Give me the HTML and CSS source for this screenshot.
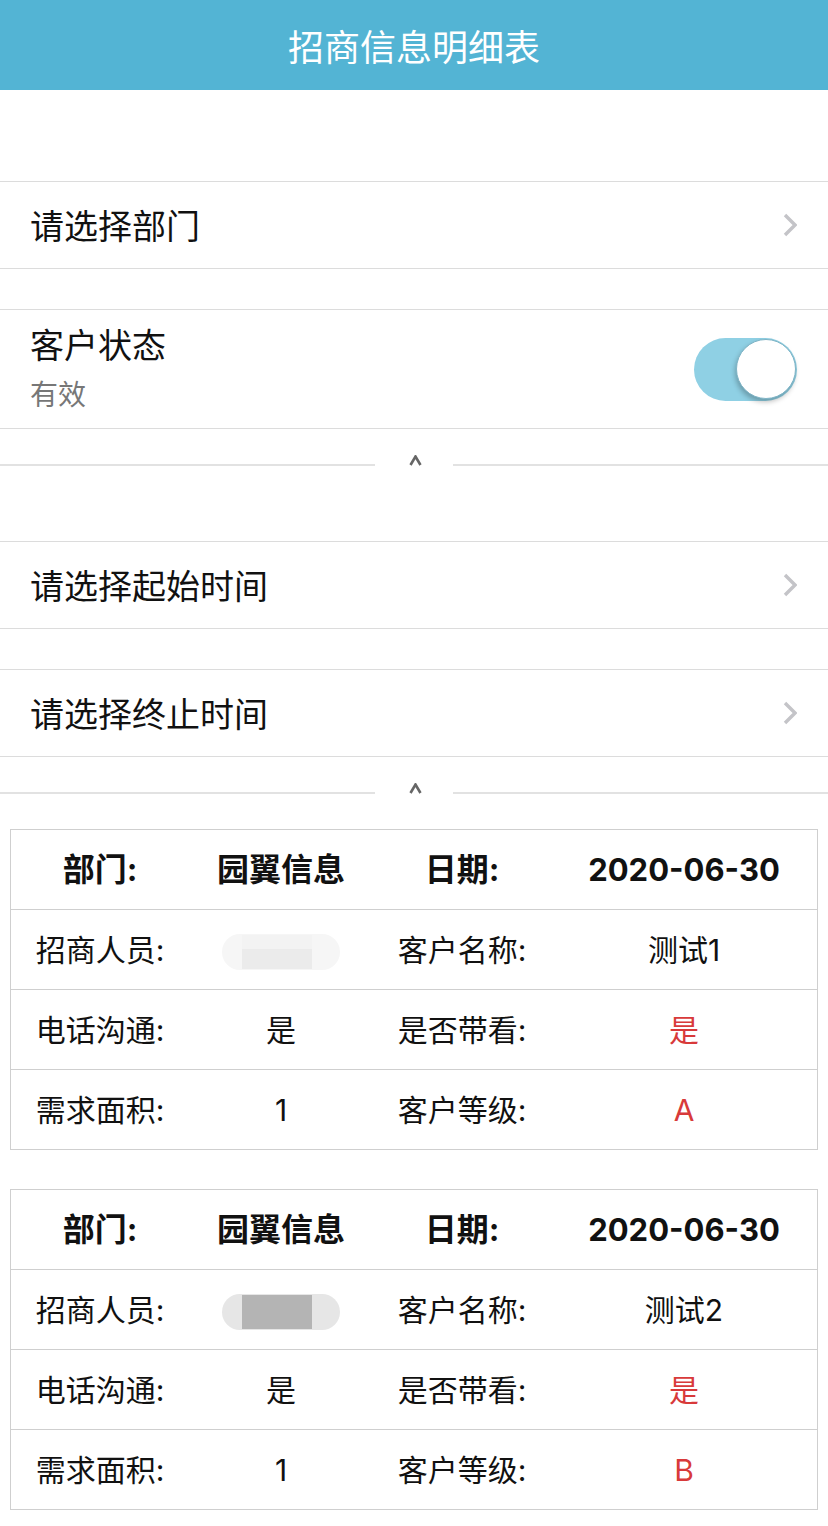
FILE: index.html
```html
<!DOCTYPE html>
<html lang="zh-CN">
<head>
<meta charset="utf-8">
<title>招商信息明细表</title>
<link rel="stylesheet" href="styles.css">
</head>
<body>
<header class="topbar"><h1 class="title">招商信息明细表</h1></header>

<div class="cell cell-first">
  <span class="cell-text">请选择部门</span>
  <svg class="chev" width="14" height="24" viewBox="0 0 14 24"><polyline points="2,2 12,12 2,22" fill="none" stroke="#c4c4c8" stroke-width="3.4"/></svg>
</div>

<div class="cell cell-tall">
  <div class="cell-stack">
    <span class="cell-text">客户状态</span>
    <span class="cell-sub">有效</span>
  </div>
  <div class="toggle"><div class="knob"></div></div>
</div>

<div class="divider">
  <div class="divider-line"></div>
  <div class="divider-mid"><svg width="13" height="11" viewBox="0 0 13 11"><polyline points="1.5,10 6.5,1.5 11.5,10" fill="none" stroke="#666" stroke-width="2.6"/></svg></div>
  <div class="divider-line"></div>
</div>

<div class="cell">
  <span class="cell-text">请选择起始时间</span>
  <svg class="chev" width="14" height="24" viewBox="0 0 14 24"><polyline points="2,2 12,12 2,22" fill="none" stroke="#c4c4c8" stroke-width="3.4"/></svg>
</div>

<div class="cell">
  <span class="cell-text">请选择终止时间</span>
  <svg class="chev" width="14" height="24" viewBox="0 0 14 24"><polyline points="2,2 12,12 2,22" fill="none" stroke="#c4c4c8" stroke-width="3.4"/></svg>
</div>

<div class="divider">
  <div class="divider-line"></div>
  <div class="divider-mid"><svg width="13" height="11" viewBox="0 0 13 11"><polyline points="1.5,10 6.5,1.5 11.5,10" fill="none" stroke="#666" stroke-width="2.6"/></svg></div>
  <div class="divider-line"></div>
</div>

<section class="card">
  <div class="row row-head">
    <span>部门:</span><span>园翼信息</span><span>日期:</span><span class="date">2020-06-30</span>
  </div>
  <div class="row">
    <span>招商人员:</span><span><span class="blur blur-light"><span class="blur-box"></span></span></span><span>客户名称:</span><span>测试1</span>
  </div>
  <div class="row">
    <span>电话沟通:</span><span>是</span><span>是否带看:</span><span class="red">是</span>
  </div>
  <div class="row">
    <span>需求面积:</span><span>1</span><span>客户等级:</span><span class="red">A</span>
  </div>
</section>

<section class="card card-next">
  <div class="row row-head">
    <span>部门:</span><span>园翼信息</span><span>日期:</span><span class="date">2020-06-30</span>
  </div>
  <div class="row">
    <span>招商人员:</span><span><span class="blur blur-dark"><span class="blur-box"></span></span></span><span>客户名称:</span><span>测试2</span>
  </div>
  <div class="row">
    <span>电话沟通:</span><span>是</span><span>是否带看:</span><span class="red">是</span>
  </div>
  <div class="row">
    <span>需求面积:</span><span>1</span><span>客户等级:</span><span class="red">B</span>
  </div>
</section>
</body>
</html>
```

FILE: styles.css
```css
* { box-sizing: border-box; }
body {
  margin: 0;
  background: #fff;
  font-family: Inter, "Noto Sans CJK SC", sans-serif;
  color: #111;
}
.topbar {
  height: 90px;
  background: #53b4d4;
  display: flex;
  align-items: center;
  justify-content: center;
}
.title {
  margin: 0;
  font-family: "Noto Sans CJK SC", sans-serif;
  font-weight: 400;
  font-size: 36px;
  line-height: 50px;
  color: #fff;
}
.cell {
  display: flex;
  align-items: center;
  justify-content: space-between;
  height: 88px;
  padding: 0 31px 0 30px;
  border-top: 1px solid #dcdcdc;
  border-bottom: 1px solid #dcdcdc;
  margin-top: 40px;
}
.cell-first { margin-top: 91px; }
.cell-tall { height: 120px; }
.cell-text {
  font-family: "Noto Sans CJK SC", sans-serif;
  font-size: 34px;
  line-height: 48px;
  color: #111;
}
.cell-stack {
  display: flex;
  flex-direction: column;
}
.cell-sub {
  font-family: "Noto Sans CJK SC", sans-serif;
  font-size: 28px;
  line-height: 50px;
  color: #777;
}
.chev { display: block; }
.toggle {
  width: 103px;
  height: 63px;
  border-radius: 32px;
  background: #8fd0e4;
  display: flex;
  align-items: center;
  justify-content: flex-end;
  padding-right: 1px;
}
.knob {
  width: 60px;
  height: 60px;
  border-radius: 50%;
  background: #fff;
  border: 1px solid #7fb4c6;
  box-shadow: -1px 3px 5px rgba(0,0,0,0.25);
}
.divider {
  display: flex;
  align-items: flex-end;
  height: 72px;
  padding: 26px 0 34px;
}
.divider-line {
  flex: 1;
  height: 2px;
  margin-bottom: 1px;
  background: #e2e2e2;
}
.divider-mid {
  width: 78px;
  height: 12px;
  display: flex;
  justify-content: center;
  align-items: flex-start;
  padding-left: 2px;
}
.divider-mid svg { display: block; }
.card {
  margin: 0 10px;
  border: 1px solid #cfcfcf;
}
.card-next { margin-top: 39px; }
.row {
  display: grid;
  grid-template-columns: 178px 184px 178px 1fr;
  align-items: center;
  height: 80px;
  border-bottom: 1px solid #cfcfcf;
  text-align: center;
  font-size: 30px;
  line-height: 40px;
  color: #111;
}
.row:last-child { height: 79px; border-bottom: 0; }
.row-head {
  font-weight: 700;
  font-size: 32px;
}
.date {
  font-size: 31px;
}
.red { color: #d83a3a; }
.blur {
  display: inline-flex;
  align-items: center;
  width: 118px;
  height: 36px;
  border-radius: 18px;
  padding-left: 20px;
  vertical-align: middle;
}
.blur-box {
  display: block;
  width: 70px;
  height: 34px;
}
.blur-light { background: #f6f6f6; }
.blur-light .blur-box { background: linear-gradient(#f3f3f3 0 40%, #ebebeb 40% 100%); }
.blur-dark { background: #e6e6e6; }
.blur-dark .blur-box { background: #b4b4b4; }
```
